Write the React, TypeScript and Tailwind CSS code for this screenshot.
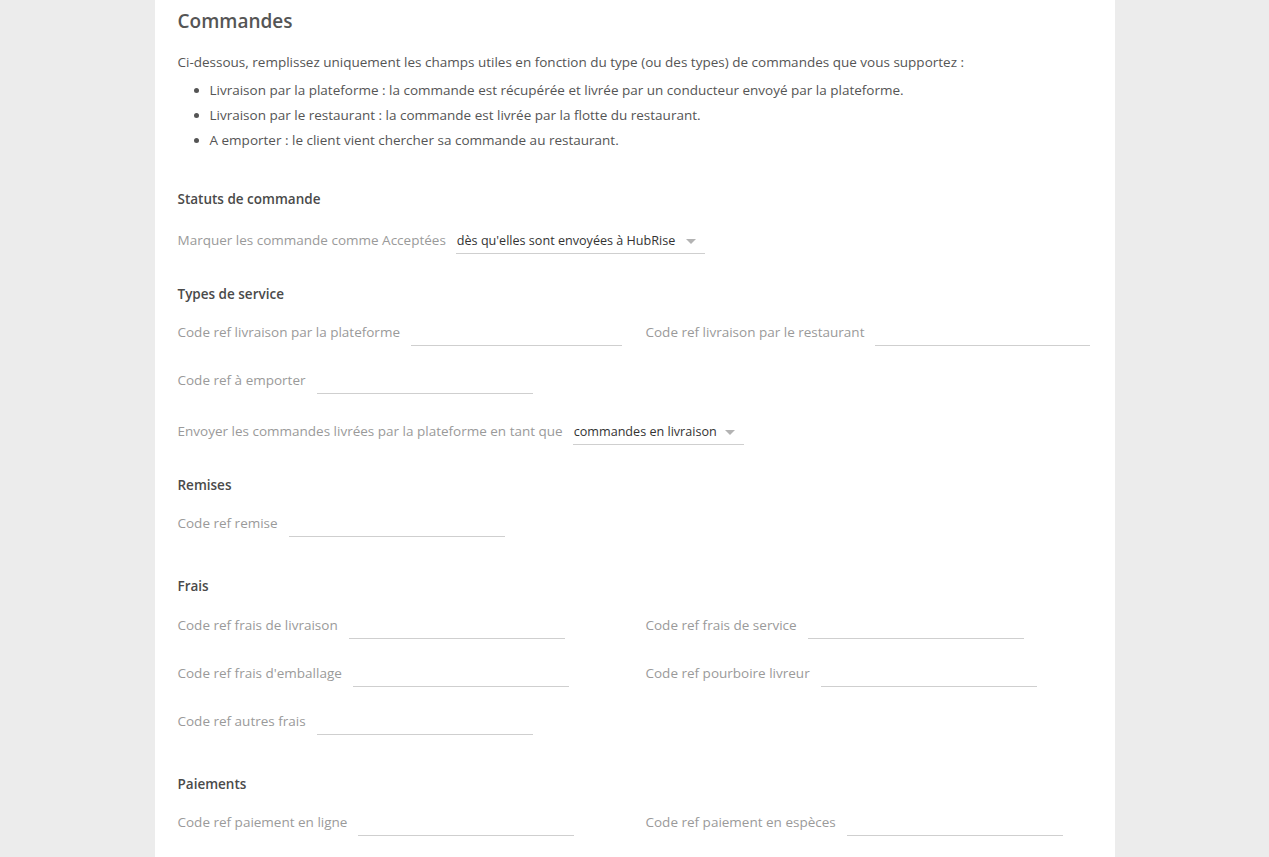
import React from 'react';

const font = { fontFamily: '"Open Sans", "Noto Sans", sans-serif' };

type Field = { label: string };

const Caret: React.FC = () => (
  <svg width="10" height="5" viewBox="0 0 10 5" className="shrink-0">
    <path d="M0 0 L10 0 L5 5 Z" fill="#b3b3b3" />
  </svg>
);

const TextField: React.FC<Field> = ({ label }) => (
  <div className="flex h-[28px] w-[444px] items-center">
    <span className="whitespace-nowrap text-[13.5px] text-[#9a9a9a]">{label}</span>
    <div className="ml-[11px] h-[28px] w-[216px] min-w-0 shrink border-b border-[#cfcfcf]" />
  </div>
);

const SelectField: React.FC<{ label: string; value: string; width: string }> = ({ label, value, width }) => (
  <div className="flex h-[28px] items-center">
    <span className="whitespace-nowrap text-[13.5px] text-[#9a9a9a]">{label}</span>
    <div className={`ml-[10px] flex h-[28px] items-center justify-between border-b border-[#cfcfcf] pl-[1px] pr-[9px] pt-[3px] ${width}`}>
      <span className="whitespace-nowrap text-[12.6px] text-[#333]">{value}</span>
      <Caret />
    </div>
  </div>
);

const Heading: React.FC<{ children: React.ReactNode; className: string }> = ({ children, className }) => (
  <h3 className={`h-[20px] text-[13.5px] font-semibold leading-[20px] text-[#4a4a4a] ${className}`}>{children}</h3>
);

const App: React.FC = () => {
  return (
    <div className="min-h-screen w-full bg-[#ececec]" style={font}>
      <div className="mx-auto min-h-screen w-[960px] bg-white pb-6 pl-[23px] pr-6 pt-[7px]">
        <h2 className="h-[28px] text-[19px] font-semibold leading-[28px] text-[#555]">Commandes</h2>

        <p className="mt-[17px] text-[13.5px] leading-[20px] text-[#555]">
          Ci-dessous, remplissez uniquement les champs utiles en fonction du type (ou des types) de commandes que vous supportez :
        </p>
        <ul className="mt-[6px] list-disc pl-[32px] text-[13.5px] leading-[25px] text-[#555]">
          <li>Livraison par la plateforme : la commande est récupérée et livrée par un conducteur envoyé par la plateforme.</li>
          <li>Livraison par le restaurant : la commande est livrée par la flotte du restaurant.</li>
          <li>A emporter : le client vient chercher sa commande au restaurant.</li>
        </ul>

        {/* Statuts */}
        <Heading className="mt-[36px]">Statuts de commande</Heading>
        <div className="mt-[17px]">
          <SelectField label="Marquer les commande comme Acceptées" value="dès qu'elles sont envoyées à HubRise" width="w-[249px]" />
        </div>

        {/* Types de service */}
        <Heading className="mt-[30px]">Types de service</Heading>
        <div className="mt-[14px] flex gap-6">
          <TextField label="Code ref livraison par la plateforme" />
          <TextField label="Code ref livraison par le restaurant" />
        </div>
        <div className="mt-[20px] flex gap-6">
          <TextField label="Code ref à emporter" />
        </div>
        <div className="mt-[23px]">
          <SelectField
            label="Envoyer les commandes livrées par la plateforme en tant que"
            value="commandes en livraison"
            width="w-[171px]"
          />
        </div>

        {/* Remises */}
        <Heading className="mt-[30px]">Remises</Heading>
        <div className="mt-[14px] flex gap-6">
          <TextField label="Code ref remise" />
        </div>

        {/* Frais */}
        <Heading className="mt-[39px]">Frais</Heading>
        <div className="mt-[15px] flex gap-6">
          <TextField label="Code ref frais de livraison" />
          <TextField label="Code ref frais de service" />
        </div>
        <div className="mt-[20px] flex gap-6">
          <TextField label="Code ref frais d'emballage" />
          <TextField label="Code ref pourboire livreur" />
        </div>
        <div className="mt-[20px] flex gap-6">
          <TextField label="Code ref autres frais" />
        </div>

        {/* Paiements */}
        <Heading className="mt-[39px]">Paiements</Heading>
        <div className="mt-[14px] flex gap-6">
          <TextField label="Code ref paiement en ligne" />
          <TextField label="Code ref paiement en espèces" />
        </div>
      </div>
    </div>
  );
};

export default App;
